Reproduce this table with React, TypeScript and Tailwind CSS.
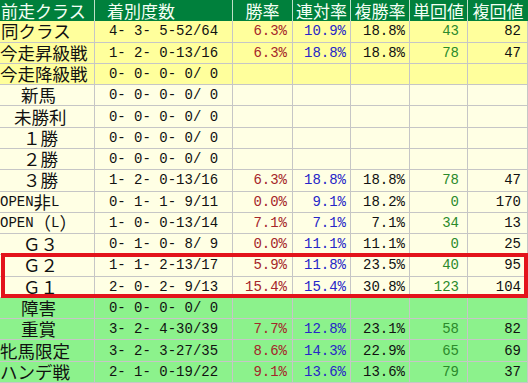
import React from 'react';

const JP = "font-['Noto_Sans_CJK_JP',sans-serif]";
const MONO = "font-['Liberation_Mono',monospace]";

const cols = 'grid grid-cols-[95px_138px_60px_58px_59px_58px_60px]';

type Stat = {
  label: React.ReactNode;
  pad: string;
  rec: string;
  win?: string;
  ren?: string;
  fuku?: string;
  tan?: string;
  fkv?: string;
  bg: string;
};

const YELLOW = 'bg-[#ffff9c]';
const CREAM = 'bg-[#ffffe4]';
const GREEN = 'bg-[#8cf28c]';

const A = ({ children }: { children: React.ReactNode }) => (
  <span className={`${MONO} inline-block scale-y-110 text-[14px]`}>{children}</span>
);

const rows: Stat[] = [
  { label: '同クラス', pad: 'pl-[1px]', rec: '4- 3- 5-52/64', win: '6.3%', ren: '10.9%', fuku: '18.8%', tan: '43', fkv: '82', bg: YELLOW },
  { label: '今走昇級戦', pad: 'pl-[0px]', rec: '1- 2- 0-13/16', win: '6.3%', ren: '18.8%', fuku: '18.8%', tan: '78', fkv: '47', bg: YELLOW },
  { label: '今走降級戦', pad: 'pl-[0px]', rec: '0- 0- 0- 0/ 0', bg: YELLOW },
  { label: '新馬', pad: 'pl-[21px]', rec: '0- 0- 0- 0/ 0', bg: CREAM },
  { label: '未勝利', pad: 'pl-[14px]', rec: '0- 0- 0- 0/ 0', bg: CREAM },
  { label: '１勝', pad: 'pl-[23px]', rec: '0- 0- 0- 0/ 0', bg: CREAM },
  { label: '２勝', pad: 'pl-[23px]', rec: '0- 0- 0- 0/ 0', bg: CREAM },
  { label: '３勝', pad: 'pl-[23px]', rec: '1- 2- 0-13/16', win: '6.3%', ren: '18.8%', fuku: '18.8%', tan: '78', fkv: '47', bg: CREAM },
  {
    label: (
      <>
        <A>OPEN</A>非<A>L</A>
      </>
    ),
    pad: 'pl-[0px]',
    rec: '0- 1- 1- 9/11',
    win: '0.0%',
    ren: '9.1%',
    fuku: '18.2%',
    tan: '0',
    fkv: '170',
    bg: CREAM,
  },
  {
    label: (
      <>
        <A>OPEN</A>（<A>L</A>）
      </>
    ),
    pad: 'pl-[0px]',
    rec: '1- 0- 0-13/14',
    win: '7.1%',
    ren: '7.1%',
    fuku: '7.1%',
    tan: '34',
    fkv: '13',
    bg: CREAM,
  },
  { label: 'Ｇ３', pad: 'pl-[23px]', rec: '0- 1- 0- 8/ 9', win: '0.0%', ren: '11.1%', fuku: '11.1%', tan: '0', fkv: '25', bg: CREAM },
  { label: 'Ｇ２', pad: 'pl-[23px]', rec: '1- 1- 2-13/17', win: '5.9%', ren: '11.8%', fuku: '23.5%', tan: '40', fkv: '95', bg: CREAM },
  { label: 'Ｇ１', pad: 'pl-[23px]', rec: '2- 0- 2- 9/13', win: '15.4%', ren: '15.4%', fuku: '30.8%', tan: '123', fkv: '104', bg: CREAM },
  { label: '障害', pad: 'pl-[21px]', rec: '0- 0- 0- 0/ 0', bg: GREEN },
  { label: '重賞', pad: 'pl-[21px]', rec: '3- 2- 4-30/39', win: '7.7%', ren: '12.8%', fuku: '23.1%', tan: '58', fkv: '82', bg: GREEN },
  { label: '牝馬限定', pad: 'pl-[0px]', rec: '3- 2- 3-27/35', win: '8.6%', ren: '14.3%', fuku: '22.9%', tan: '65', fkv: '69', bg: GREEN },
  { label: 'ハンデ戦', pad: 'pl-[0px]', rec: '2- 1- 0-19/22', win: '9.1%', ren: '13.6%', fuku: '13.6%', tan: '79', fkv: '37', bg: GREEN },
];

const cell = 'flex items-center border-r border-b border-[#c6c6c6] whitespace-pre';

// numeric text, a little taller like the original gothic digits
const Num = ({ v }: { v?: string }) =>
  v ? <span className={`${MONO} inline-block scale-y-110 text-[14px] leading-[16px]`}>{v}</span> : null;

const Header = () => (
  <div className={`${cols} bg-[#00803c] text-[#f4fff4] ${JP} text-[17px] leading-[20px]`}>
    <div className="flex items-center border-r border-[#bfe0c8] pl-[1px]">前走クラス</div>
    <div className="flex items-center border-r border-[#bfe0c8] pl-[12px]">着別度数</div>
    <div className="flex items-center justify-center border-r border-[#bfe0c8]">勝率</div>
    <div className="flex items-center justify-center border-r border-[#bfe0c8]">連対率</div>
    <div className="flex items-center justify-center border-r border-[#bfe0c8]">複勝率</div>
    <div className="flex items-center justify-center border-r border-[#bfe0c8]">単回値</div>
    <div className="flex items-center justify-center">複回値</div>
  </div>
);

const DataRow = ({ r }: { r: Stat }) => (
  <div className={`${cols} ${r.bg}`}>
    <div className={`${cell} ${r.pad} ${JP} text-[17.5px] leading-[20px] text-[#111]`}>{r.label}</div>
    <div className={`${cell} justify-center text-[#111]`}>
      <Num v={r.rec} />
    </div>
    <div className={`${cell} justify-end pr-[5px] text-[#a5262a]`}>
      <Num v={r.win} />
    </div>
    <div className={`${cell} justify-end pr-[4px] text-[#2626c8]`}>
      <Num v={r.ren} />
    </div>
    <div className={`${cell} justify-end pr-[4px] text-[#111]`}>
      <Num v={r.fuku} />
    </div>
    <div className={`${cell} justify-end pr-[8px] text-[#2b8a2b]`}>
      <Num v={r.tan} />
    </div>
    <div className={`${cell} justify-end pr-[6px] text-[#111]`}>
      <Num v={r.fkv} />
    </div>
  </div>
);

export default function App() {
  return (
    <div className="relative h-[383px] w-[528px] overflow-hidden bg-white">
      <div className="grid h-[383px] grid-rows-[repeat(18,minmax(0,1fr))]">
        <Header />
        {rows.map((r, i) => (
          <DataRow key={i} r={r} />
        ))}
      </div>
      {/* highlight box over G2 / G1 */}
      <div className="pointer-events-none absolute left-[1px] top-[253px] h-[45px] w-[527px] border-[4px] border-[#e3141c]" />
    </div>
  );
}
